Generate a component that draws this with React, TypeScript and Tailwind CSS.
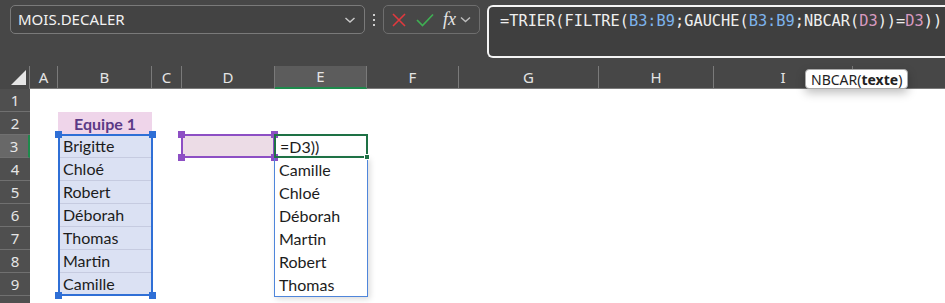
import React from "react";

const cols = [
  { key: "A", w: "w-[28px]" },
  { key: "B", w: "w-[94px]" },
  { key: "C", w: "w-[30px]" },
  { key: "D", w: "w-[93px]" },
  { key: "E", w: "w-[92px]" },
  { key: "F", w: "w-[92px]" },
  { key: "G", w: "w-[140px]" },
  { key: "H", w: "w-[115px]" },
  { key: "I", w: "w-[139px]" },
  { key: "J", w: "w-[200px]" },
];

const team = ["Brigitte", "Chloé", "Robert", "Déborah", "Thomas", "Martin", "Camille"];
const sorted = ["Camille", "Chloé", "Déborah", "Martin", "Robert", "Thomas"];

const cellFont = { fontFamily: "Lato, 'Open Sans', sans-serif" };
const uiFont = { fontFamily: "'Noto Sans', 'Open Sans', sans-serif" };

// range highlight drawn over the cells, with square handles on the corners
function Selection({ className, color }: { className: string; color: string }) {
  return (
    <div className={`absolute border-2 ${className}`}>
      <div className={`absolute -left-[5px] -top-[5px] h-[7px] w-[7px] ${color}`} />
      <div className={`absolute -right-[5px] -top-[5px] h-[7px] w-[7px] ${color}`} />
      <div className={`absolute -bottom-[5px] -left-[5px] h-[7px] w-[7px] ${color}`} />
      <div className={`absolute -bottom-[5px] -right-[5px] h-[7px] w-[7px] ${color}`} />
    </div>
  );
}

function Cell({ row, col }: { row: number; col: string }) {
  if (col === "B" && row === 2) {
    return (
      <div className="flex h-full items-center justify-center bg-[#efd5ea] font-bold text-[#5b3a86]">
        Equipe 1
      </div>
    );
  }
  if (col === "B" && row >= 3 && row <= 9) {
    return (
      <div className="flex h-full items-center border-b border-[#c6cbe0] bg-[#dbe1f3] pl-[5px] text-[#1c1c1c]">
        {team[row - 3]}
      </div>
    );
  }
  if (col === "D" && row === 3) {
    return <div className="h-full bg-[#ecdce6]" />;
  }
  if (col === "E" && row === 3) {
    return <div className="flex h-full items-center pl-[5px] text-[#1c1c1c]">=D3))</div>;
  }
  if (col === "E" && row >= 4 && row <= 9) {
    return <div className="flex h-full items-center pl-[4px] text-[#1c1c1c]">{sorted[row - 4]}</div>;
  }
  return null;
}

export default function App() {
  const rows = [1, 2, 3, 4, 5, 6, 7, 8, 9, 10];

  return (
    <div className="h-[303px] w-[945px] overflow-hidden bg-[#474747]" style={uiFont}>
      {/* formula bar */}
      <div className="flex h-[66px] items-start pt-[5px] pl-[10px]">
        <div className="flex h-[29px] w-[355px] items-center justify-between rounded-[5px] border border-[#7a7a7a] bg-[#434343] pl-[7px] pr-[8px]">
          <span className="text-[15px] text-[#f2f2f2]">MOIS.DECALER</span>
          <svg width="12" height="8" viewBox="0 0 12 8" fill="none" stroke="#c8c8c8" strokeWidth="1.5">
            <path d="M1.5 2 L6 6 L10.5 2" />
          </svg>
        </div>
        <div className="flex h-[29px] w-[18px] flex-col items-center justify-center gap-[3px]">
          <div className="h-[2px] w-[2px] bg-[#cfcfcf]" />
          <div className="h-[2px] w-[2px] bg-[#cfcfcf]" />
          <div className="h-[2px] w-[2px] bg-[#cfcfcf]" />
        </div>
        <div className="flex h-[29px] w-[97px] items-center rounded-[5px] border border-[#6e6e6e] pl-[7px]">
          <svg width="16" height="16" viewBox="0 0 16 16" stroke="#e0393e" strokeWidth="1.6">
            <path d="M2 2 L14 14 M14 2 L2 14" />
          </svg>
          <svg className="ml-[9px]" width="18" height="14" viewBox="0 0 18 14" fill="none" stroke="#3fae53" strokeWidth="1.7">
            <path d="M1 7 L6.5 12.5 L17 1.5" />
          </svg>
          <span className="ml-[9px] text-[18px] italic text-[#e6e6e6]" style={{ fontFamily: "'Liberation Serif', serif" }}>
            fx
          </span>
          <svg className="ml-[4px]" width="11" height="7" viewBox="0 0 11 7" fill="none" stroke="#bdbdbd" strokeWidth="1.4">
            <path d="M1 1.5 L5.5 5.5 L10 1.5" />
          </svg>
        </div>
        <div className="ml-[7px] flex h-[53px] flex-1 rounded-l-[6px] border-2 border-r-0 border-[#f4f4f4] bg-[#3f3f3f] pl-[11px] pt-[4px]">
          <span className="text-[15.3px] leading-[20px] text-[#efefef]" style={{ fontFamily: "'DejaVu Sans Mono', monospace" }}>
            =TRIER(FILTRE(<span className="text-[#7db3ec]">B3:B9</span>;GAUCHE(
            <span className="text-[#7db3ec]">B3:B9</span>;NBCAR(<span className="text-[#d89ac0]">D3</span>))=
            <span className="text-[#d89ac0]">D3</span>))
          </span>
        </div>
      </div>

      {/* sheet */}
      <div className="relative" style={cellFont}>
        {/* column headers */}
        <div className="flex h-[23px] bg-[#474747]" style={uiFont}>
          <div className="flex w-[30px] shrink-0 items-end justify-end border-r border-[#7a7a7a] pb-[4px] pr-[3px]">
            <div className="h-0 w-0 border-b-[15px] border-l-[15px] border-b-[#e6e6e6] border-l-transparent" />
          </div>
          {cols.map((c) => (
            <div
              key={c.key}
              className={`flex shrink-0 items-center justify-center border-r border-[#7a7a7a] text-[15px] text-[#e4e4e4] ${c.w} ${
                c.key === "E" ? "border-b-2 border-b-[#1e8a4c] bg-[#5c5c5c]" : "border-b border-b-[#7a7a7a]"
              }`}
            >
              {c.key === "J" ? "" : c.key}
            </div>
          ))}
        </div>

        {/* rows */}
        {rows.map((r) => (
          <div key={r} className="flex h-[23px] bg-white">
            <div
              className={`flex w-[30px] shrink-0 items-center justify-center border-b border-[#707070] text-[15px] text-[#e6e6e6] ${
                r === 3 ? "border-r-2 border-r-[#1e8a4c] bg-[#686868]" : "bg-[#4f4f4f]"
              }`}
              style={uiFont}
            >
              {r < 10 ? r : ""}
            </div>
            {cols.map((c) => (
              <div key={c.key} className={`shrink-0 text-[16px] ${c.w}`}>
                <Cell row={r} col={c.key} />
              </div>
            ))}
          </div>
        ))}

        {/* B3:B9 and D3 reference highlights */}
        <Selection className="left-[58px] top-[68px] h-[162px] w-[95px] border-[#2f6fd6]" color="bg-[#2f6fd6]" />
        <Selection className="left-[181px] top-[68px] h-[24px] w-[94px] border-[#8d4fc4]" color="bg-[#8d4fc4]" />

        {/* spill range */}
        <div className="absolute left-[274px] top-[91px] h-[140px] w-[94px] border border-[#4f86db] shadow-[2px_2px_6px_rgba(0,0,0,0.15)]" />

        {/* active cell E3 */}
        <div className="absolute left-[274px] top-[68px] h-[24px] w-[94px] border-2 border-[#1e7145]">
          <div className="absolute -bottom-[4px] -right-[4px] h-[6px] w-[6px] border border-white bg-[#1e7145]" />
        </div>

        {/* tooltip */}
        <div
          className="absolute left-[805px] top-[3px] flex h-[20px] items-center rounded-[4px] border border-[#a9a9a9] bg-white px-[5px] text-[14px] text-[#222] shadow-[0_4px_10px_rgba(0,0,0,0.25)]"
          style={uiFont}
        >
          NBCAR(<b>texte</b>)
        </div>
      </div>
    </div>
  );
}
